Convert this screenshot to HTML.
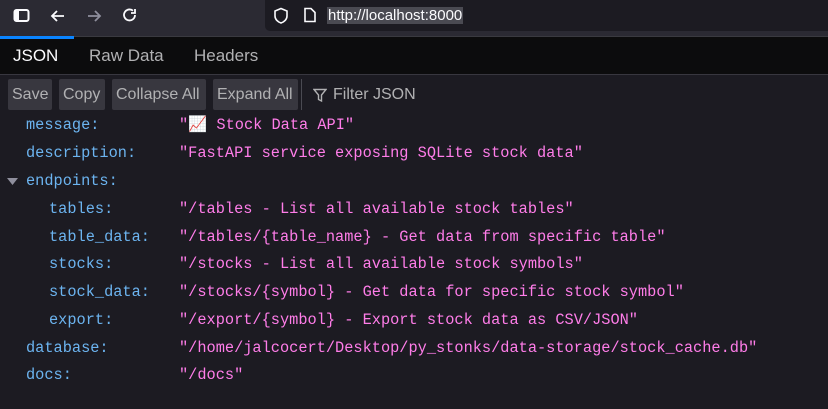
<!DOCTYPE html>
<html><head><meta charset="utf-8"><style>
*{margin:0;padding:0;box-sizing:border-box}
body{width:828px;height:409px;background:#1c1b22;overflow:hidden;font-family:"Liberation Sans",sans-serif;position:relative}
.top{position:absolute;left:0;top:0;width:828px;height:36px;background:#2b2a33}
.url{position:absolute;left:265px;top:0;width:563px;height:31px;background:#1c1b22;border-radius:0 0 0 5px}
.url span{position:absolute;left:62px;top:7px;font-size:15px;color:#fbfbfe;background:#4a4a52;padding:0 1px;line-height:17px}
.tabs{position:absolute;left:0;top:36px;width:828px;height:38px;background:#0c0c0d;border-top:1px solid #3a3a40}
.tabs .ind{position:absolute;left:0;top:-1px;width:74px;height:3px;background:#0a84ff}
.tab{position:absolute;top:9px;font-size:17px;color:#b1b1b3}
.bar{position:absolute;left:0;top:74px;width:828px;height:38px;background:#1c1b22;border-top:1px solid #38373f}
.btn{position:absolute;top:4px;height:31px;background:#38373f;color:#b1b1b3;font-size:16px;line-height:31px;padding-left:4px;border-radius:2px}
.filter{position:absolute;left:301px;top:4px;width:527px;height:31px;background:#1c1b22;border-left:1px solid #4a4a52;color:#b1b1b3;font-size:16px;line-height:31px;padding-left:31px}
.row{position:absolute;font-family:"Liberation Mono",monospace;font-size:15.3px;line-height:18px}
.k{color:#6cb4f0}.s{color:#ff7de9}
</style></head><body>
<div class="top">
<svg style="position:absolute;left:13px;top:8px" width="18" height="16"><rect x="1.5" y="2" width="14" height="11" rx="2" fill="none" stroke="#fbfbfe" stroke-width="2"/><rect x="2" y="3" width="4" height="9" fill="#fbfbfe"/></svg>
<svg style="position:absolute;left:49px;top:7px" width="18" height="18"><path d="M15 9H3M8 4L3 9l5 5" fill="none" stroke="#fbfbfe" stroke-width="1.8"/></svg>
<svg style="position:absolute;left:85px;top:7px" width="18" height="18"><path d="M3 9h12M10 4l5 5-5 5" fill="none" stroke="#8f8f9d" stroke-width="1.8"/></svg>
<svg style="position:absolute;left:121px;top:6px" width="18" height="18"><path d="M14 9a5.5 5.5 0 1 1-2-4.3M14 3v4h-4" fill="none" stroke="#fbfbfe" stroke-width="1.8"/></svg>
<div class="url">
<svg style="position:absolute;left:8px;top:7px" width="16" height="18"><path d="M8 1.5L2 4v5c0 3.5 3 6 6 7 3-1 6-3.5 6-7V4z" fill="none" stroke="#fbfbfe" stroke-width="1.6"/></svg>
<svg style="position:absolute;left:38px;top:7px" width="14" height="16"><path d="M2 1.5h6l4 4v9H2z" fill="none" stroke="#fbfbfe" stroke-width="1.6"/></svg>
<span>http://localhost:8000</span>
</div>
</div>
<div class="tabs"><div class="ind"></div>
<div class="tab" style="left:13px;color:#fbfbfe">JSON</div>
<div class="tab" style="left:89px">Raw Data</div>
<div class="tab" style="left:194px">Headers</div>
</div>
<div class="bar">
<div class="btn" style="left:8px;width:44px">Save</div>
<div class="btn" style="left:59px;width:46px">Copy</div>
<div class="btn" style="left:112px;width:94px">Collapse All</div>
<div class="btn" style="left:213px;width:85px">Expand All</div>
<div class="filter"><svg style="position:absolute;left:11px;top:9px" width="14" height="15"><path d="M1 1.5h12L8.5 7v6l-3-1.5V7z" fill="none" stroke="#b1b1b3" stroke-width="1.4"/></svg>Filter JSON</div>
</div>
<div class="row" style="top:116px;left:26px"><span class="k">message:</span></div><div class="row s" style="top:116px;left:179px">"📈 Stock Data API"</div>
<div class="row" style="top:144px;left:26px"><span class="k">description:</span></div><div class="row s" style="top:144px;left:179px">"FastAPI service exposing SQLite stock data"</div>
<svg style="position:absolute;left:7px;top:178px" width="12" height="8"><path d="M0 0h11L5.5 7z" fill="#8f8f9d"/></svg>
<div class="row" style="top:172px;left:26px"><span class="k">endpoints:</span></div>
<div class="row" style="top:200px;left:49px"><span class="k">tables:</span></div><div class="row s" style="top:200px;left:179px">"/tables - List all available stock tables"</div>
<div class="row" style="top:228px;left:49px"><span class="k">table_data:</span></div><div class="row s" style="top:228px;left:179px">"/tables/{table_name} - Get data from specific table"</div>
<div class="row" style="top:255px;left:49px"><span class="k">stocks:</span></div><div class="row s" style="top:255px;left:179px">"/stocks - List all available stock symbols"</div>
<div class="row" style="top:283px;left:49px"><span class="k">stock_data:</span></div><div class="row s" style="top:283px;left:179px">"/stocks/{symbol} - Get data for specific stock symbol"</div>
<div class="row" style="top:311px;left:49px"><span class="k">export:</span></div><div class="row s" style="top:311px;left:179px">"/export/{symbol} - Export stock data as CSV/JSON"</div>
<div class="row" style="top:339px;left:26px"><span class="k">database:</span></div><div class="row s" style="top:339px;left:179px">"/home/jalcocert/Desktop/py_stonks/data-storage/stock_cache.db"</div>
<div class="row" style="top:366px;left:26px"><span class="k">docs:</span></div><div class="row s" style="top:366px;left:179px">"/docs"</div>
</body></html>
